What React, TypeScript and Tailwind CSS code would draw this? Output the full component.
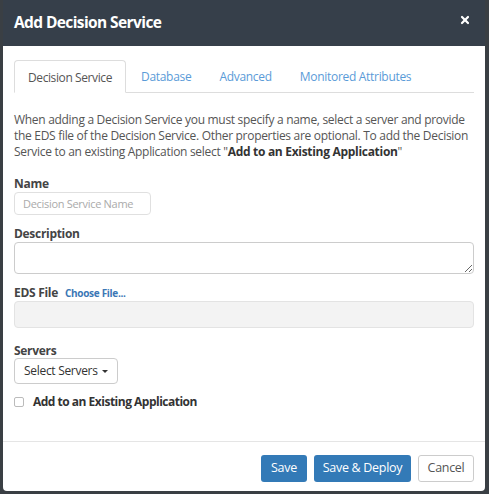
import { X } from "lucide-react";

const tabs = ["Decision Service", "Database", "Advanced", "Monitored Attributes"];

export default function App() {
  return (
    <div
      className="h-[494px] w-[489px] bg-[#3a3f44] pl-[3px] pr-[4px] pb-[3px] text-[12px] tracking-[-0.3px] text-[#333]"
      style={{ fontFamily: '"Open Sans", "Liberation Sans", sans-serif' }}
    >
      <div className="flex h-full flex-col overflow-hidden rounded-b-[4px] bg-white">
        {/* Header */}
        <div className="flex h-[46px] shrink-0 items-center justify-between bg-[#363f4a] pl-[11px] pr-[14px]">
          <h1 className="text-[15.5px] font-bold tracking-[-0.6px] text-white">Add Decision Service</h1>
          <X className="mb-[6px] h-[12px] w-[12px] text-white" strokeWidth={4.5} />
        </div>

        {/* Body */}
        <div className="flex-1 px-[11px] pt-[14px]">
          <div className="flex border-b border-[#ddd]">
            {tabs.map((t, i) => (
              <div
                key={t}
                className={
                  i === 0
                    ? "-mb-px rounded-t-[4px] border border-[#ddd] border-b-white bg-white px-[13px] pt-[8px] pb-[6px] leading-[17px] tracking-[-0.4px] text-[#555]"
                    : "ml-[2px] px-[13px] pt-[8px] pb-[6px] leading-[17px] text-[#5a9bd8]"
                }
              >
                {t}
              </div>
            ))}
          </div>

          <p className="mt-[19px] leading-[16px] text-[#555]">
            When adding a Decision Service you must specify a name, select a server and provide the EDS file of the
            Decision Service. Other properties are optional. To add the Decision Service to an existing Application
            select "<b className="text-[#333]">Add to an Existing Application</b>"
          </p>

          <div className="mt-[16px] font-bold leading-[16px] text-[#444]">Name</div>
          <input
            className="mt-0 h-[23px] w-[137px] rounded-[4px] border border-[#e0e0e0] px-[8px] text-[11px] placeholder:text-[#aaa]"
            placeholder="Decision Service Name"
          />

          <div className="mt-[11px] font-bold leading-[16px] text-[#444]">Description</div>
          <textarea className="block h-[32px] w-full rounded-[4px] border border-[#ccc]" />

          <div className="mt-[11px] flex h-[16px] items-center gap-[7px]">
            <span className="font-bold text-[#444]">EDS File</span>
            <span className="text-[10px] font-bold text-[#3b77b5]">Choose File...</span>
          </div>
          <div className="mt-0 h-[27px] w-full rounded-[4px] border border-[#e3e3e3] bg-[#f3f3f3]" />

          <div className="mt-[16px] font-bold leading-[14px] text-[#444]">Servers</div>
          <button className="mt-0 flex h-[26px] items-center gap-[4px] rounded-[4px] border border-[#ccc] bg-white px-[9px] text-[#333]">
            Select Servers
            <span className="mt-[1px] border-x-[3px] border-t-[3px] border-x-transparent border-t-[#333]" />
          </button>

          <label className="mt-[10px] flex items-center gap-[9px] font-bold leading-[16px] tracking-[-0.5px] text-[#333]">
            <span className="h-[10px] w-[10px] rounded-[2px] border border-[#bbb]" />
            Add to an Existing Application
          </label>
        </div>

        {/* Footer */}
        <div className="flex h-[50px] shrink-0 items-start justify-end gap-[7px] border-t border-[#e5e5e5] pt-[13px] pr-[11px]">
          <button className="h-[27px] w-[46px] rounded-[3px] bg-[#337ab7] text-[12.5px] text-white">Save</button>
          <button className="h-[27px] w-[97px] rounded-[3px] bg-[#337ab7] text-[12.5px] text-white">Save &amp; Deploy</button>
          <button className="h-[27px] w-[56px] rounded-[3px] border border-[#ccc] bg-white text-[12.5px] text-[#555]">Cancel</button>
        </div>
      </div>
    </div>
  );
}
